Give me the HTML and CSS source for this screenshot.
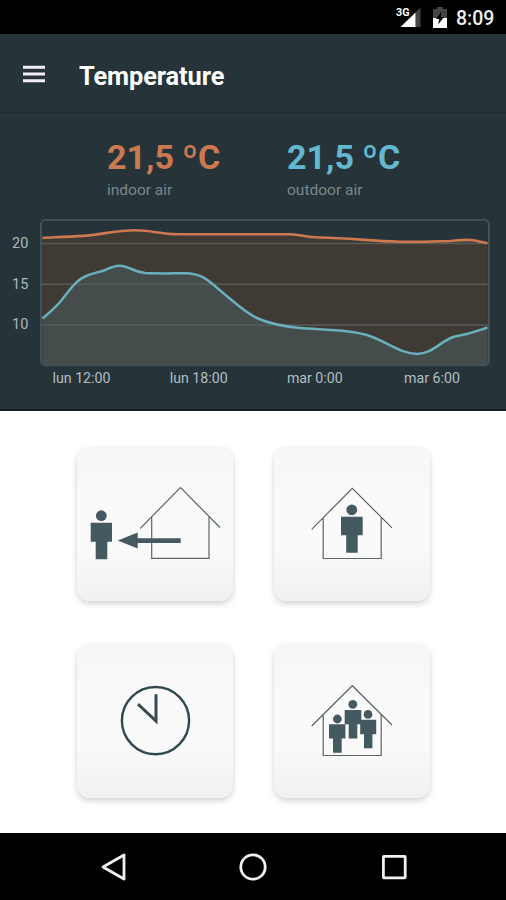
FILE: index.html
```html
<!DOCTYPE html>
<html lang="en">
<head>
<meta charset="utf-8">
<title>Temperature</title>
<link rel="stylesheet" href="styles.css">
</head>
<body>
<div class="screen">
  <div class="status">
    <svg class="signal" width="28" height="24" viewBox="0 0 28 24">
      <path d="M22.5 2.5V22h-5V7.5z" fill="#444"/>
      <path d="M17.5 7.5V22H2.5z" fill="#fff"/>
      <text x="-2" y="11" class="net" textLength="13.5" lengthAdjust="spacingAndGlyphs">3G</text>
    </svg>
    <svg class="battery" width="14" height="22" viewBox="0 0 14 22">
      <path d="M4 1h6v2h4v9H0V3h4z" fill="#444"/>
      <path d="M0 12h14v10H0z" fill="#fff"/>
      <path d="M8.5 5.5L3 13h3.2L5.2 18.5 11 11H7.7z" fill="#000"/>
    </svg>
    <span class="clock">8:09</span>
  </div>
  <header class="appbar">
    <svg class="menu" width="22" height="18" viewBox="0 0 22 18">
      <path d="M0 2.2h22M0 9h22M0 15.7h22" stroke="#f3eef3" stroke-width="2.9"/>
    </svg>
    <h1>Temperature</h1>
  </header>
  <section class="panel">
    <div class="readings">
      <div class="reading indoor"><strong>21,5 <i>º</i>C</strong><span>indoor air</span></div>
      <div class="reading outdoor"><strong>21,5 <i>º</i>C</strong><span>outdoor air</span></div>
    </div>
    <div class="chart">
      <div class="ylabels"><span>20</span><span>15</span><span>10</span></div>
      <svg width="450" height="148" viewBox="40 219 450 148">
        <path d="M42.5 237.8C56 237.2 70 236.8 83 235.9C100 234.5 118 230.3 135 230.3C152 230.5 160 234 178 234.3H290C302 234.5 304 237 320 237.5C350 238 370 241 400 241.8C420 242 430 241.3 450 241C460 240 468 239 475 240.5L487.5 243.2V365H42.5z" fill="#403a34"/>
        <path d="M42.5 318.5C50 312 54 309 60 302C70 290 76 280 86 276C94 272.5 99 272.5 105 270C112 267 115 265.5 120 265.8C130 266.5 134 272 145 273C160 273.7 172 273.3 187 273.3C204 274 211 283 222 292C232 300 245 313 258 318.5C270 324 285 326.5 300 328C320 329.8 348 329 367 335C386 341 400 353.7 417 353.9C434 353.5 441 340 455 336.5C470 334 472 333 487.5 327.5V365H42.5z" fill="#444d4b"/>
        <path d="M42 243.6h446M42 284.3h446M42 325h446" stroke="#565b58" stroke-width="1.5"/>
        <rect x="41" y="219.8" width="448" height="145.4" rx="5" fill="none" stroke="#445257" stroke-width="2"/>
        <path d="M42.5 237.8C56 237.2 70 236.8 83 235.9C100 234.5 118 230.3 135 230.3C152 230.5 160 234 178 234.3H290C302 234.5 304 237 320 237.5C350 238 370 241 400 241.8C420 242 430 241.3 450 241C460 240 468 239 475 240.5L487.5 243.2" fill="none" stroke="#cc7850" stroke-width="2.6"/>
        <path d="M42.5 318.5C50 312 54 309 60 302C70 290 76 280 86 276C94 272.5 99 272.5 105 270C112 267 115 265.5 120 265.8C130 266.5 134 272 145 273C160 273.7 172 273.3 187 273.3C204 274 211 283 222 292C232 300 245 313 258 318.5C270 324 285 326.5 300 328C320 329.8 348 329 367 335C386 341 400 353.7 417 353.9C434 353.5 441 340 455 336.5C470 334 472 333 487.5 327.5" fill="none" stroke="#69afbc" stroke-width="2.5"/>
      </svg>
      <div class="xlabels"><span>lun 12:00</span><span>lun 18:00</span><span>mar 0:00</span><span>mar 6:00</span></div>
    </div>
  </section>
  <main class="tiles">
    <div class="tile">
      <svg viewBox="0 0 155 154">
        <path class="line" d="M63.3 81.3L103.5 40.5L143 80.5M74.7 69.7V111.3H132V69.7"/>
        <g class="solid"><circle cx="24.3" cy="68.7" r="5.4"/><path d="M13.7 75.7H35V94.7H30.3V112.3H18.7V94.7H13.7z"/><path d="M40.7 93.6L60.7 85.4V91.3H103.7V96H60.7V101.6z"/></g>
      </svg>
    </div>
    <div class="tile">
      <svg viewBox="0 0 155 154">
        <path class="line" d="M37.7 82.3L78.3 41.3L118 80.9M49.2 71V111.5H107.2V71"/>
        <g class="solid"><circle cx="77.8" cy="62.8" r="5.4"/><path d="M67 69.8H88.7V88.3H83.7V105.8H72.2V88.3H67z"/></g>
      </svg>
    </div>
    <div class="tile">
      <svg viewBox="0 0 155 154">
        <circle class="dial" cx="78.5" cy="76.6" r="33.6"/>
        <path class="hands" d="M79 50.3V77L61 60.2"/>
      </svg>
    </div>
    <div class="tile">
      <svg viewBox="0 0 155 154">
        <path class="line" d="M37.7 82L78.3 41.7L118 81M49.2 71V111.5H107.2V71"/>
        <g class="solid">
          <circle cx="78.8" cy="60.3" r="4.4"/><path d="M70.7 66H87.3V80.3H83.3V94.5H74.7V80.3H70.7z"/>
          <circle cx="63.4" cy="75" r="4.4"/><path d="M55 80.3H71.4V94.5H67.7V108.8H59V94.5H55z"/>
          <circle cx="94" cy="70.4" r="4.4"/><path d="M86.2 75.7H102.2V90.2H98.4V104.3H90V90.2H86.2z"/>
        </g>
      </svg>
    </div>
  </main>
  <nav class="navbar">
    <svg width="28" height="28" viewBox="0 0 28 28"><path d="M25 2V26L4 14z"/></svg>
    <svg width="28" height="28" viewBox="0 0 28 28"><circle cx="14" cy="14" r="12.2"/></svg>
    <svg width="28" height="28" viewBox="0 0 28 28"><rect x="3.4" y="3.4" width="21.8" height="21.4" rx=".5"/></svg>
  </nav>
</div>
</body>
</html>
```
FILE: styles.css
```css
* { box-sizing: border-box; }
body { margin: 0; font-family: Roboto, "Liberation Sans", sans-serif; background: #fff; }
svg { display: block; }
.screen { width: 506px; height: 900px; display: flex; flex-direction: column; overflow: hidden; }

.status { height: 34px; background: #000; display: flex; align-items: flex-start; justify-content: flex-end; padding: 6px 11px 0 0; }
.signal { margin: -1px 7px 0 0; overflow: visible; }
.net { font: bold 10.5px Roboto, sans-serif; fill: #fff; stroke: #000; stroke-width: 1.5px; paint-order: stroke; }
.battery { margin-right: 9px; }
.clock { width: 39px; color: #f0f0f0; font-size: 19.5px; font-weight: 500; line-height: 25px; white-space: nowrap; }

.appbar { height: 79px; background: #263439; display: flex; align-items: center; padding: 2px 0 0 23px; border-bottom: 1px solid #1f2b2f; }
.menu { margin-right: 34px; }
h1 { margin: 0; color: #fff; font-size: 25.4px; font-weight: 700; line-height: 30px; letter-spacing: -.1px; padding-top: 4px; }

.panel { height: 298px; background: #263439; border-bottom: 2px solid #151f23; padding-top: 25px; }
.readings { display: flex; padding-left: 107px; height: 81px; }
.reading { width: 180px; display: flex; flex-direction: column; }
.reading strong { font-size: 34px; line-height: 38px; font-weight: 700; }
.reading i { font-style: normal; font-weight: 500; }
.reading span { color: #7a868a; font-size: 15.5px; line-height: 20px; margin-top: 4px; }
.indoor strong { color: #cc7850; }
.outdoor strong { color: #62b8cf; }
.chart { display: grid; grid-template-columns: 40px 450px; }
.ylabels { display: flex; flex-direction: column; padding: 15px 0 0 12px; }
.ylabels span { height: 40.7px; line-height: 20px; font-size: 14.5px; color: #abb7bb; }
.xlabels { grid-column: 2; display: flex; padding-left: 12.5px; color: #b2bdc1; font-size: 14.2px; line-height: 20px; margin-top: 1px; }
.xlabels span { width: 117.2px; flex: none; }

.tiles { height: 422px; padding: 36px 0 0 77px; display: grid; grid-template-columns: 156px 156px; grid-template-rows: 154px 154px; gap: 43px 41px; background: #fff; }
.tile { border-radius: 13px; background: linear-gradient(#f7f7f7, #fafafa 45%, #fafafa 65%, #f0f0f0); box-shadow: 0 3px 6px rgba(0,0,0,.17), 0 0 3px rgba(0,0,0,.04); }
.tile svg { width: 155px; height: 154px; }
.line { fill: none; stroke: #5a6568; stroke-width: 1.2; }
.solid { fill: #455a60; }
.dial { fill: none; stroke: #2f474e; stroke-width: 2.4; }
.hands { fill: none; stroke: #394b51; stroke-width: 3; }

.navbar { flex: 1; background: #000; display: flex; align-items: center; justify-content: center; gap: 112.5px; }
.navbar svg { fill: none; stroke: #f0f0f0; stroke-width: 2.8; stroke-linejoin: round; }
```
